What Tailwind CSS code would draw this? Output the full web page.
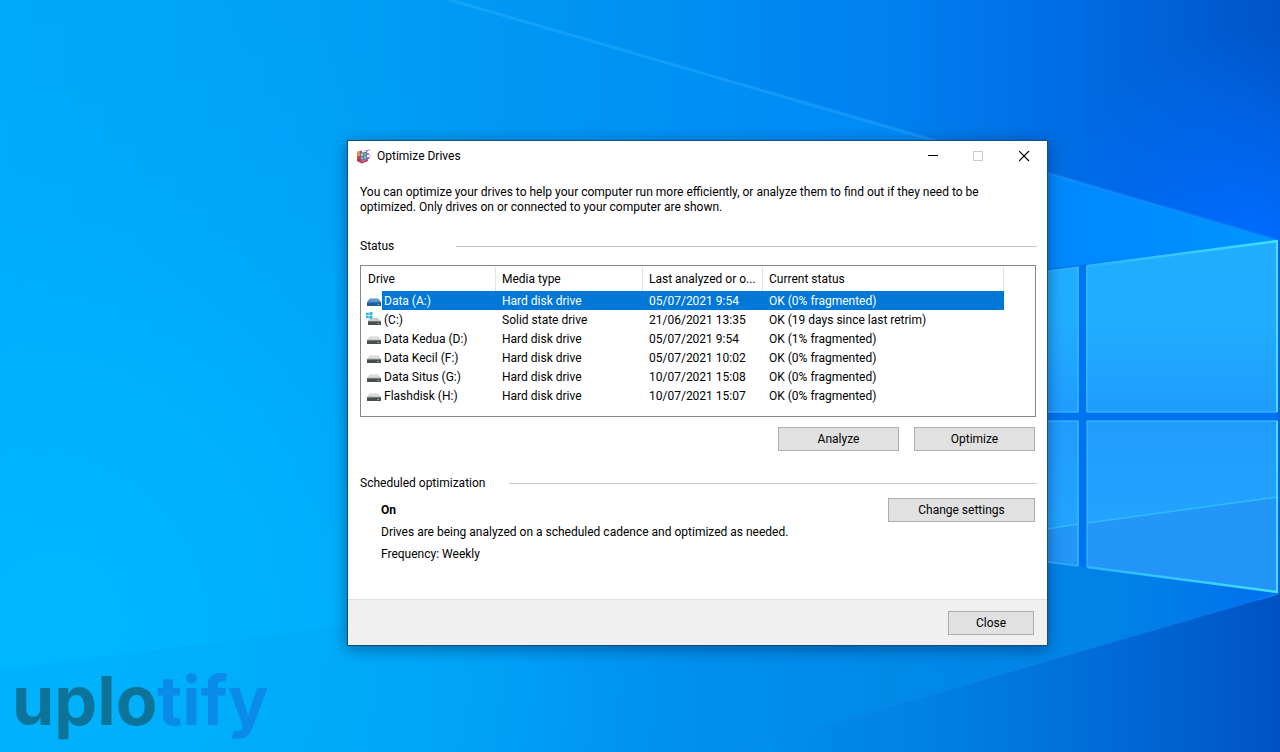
<!DOCTYPE html>
<html lang="en">
<head>
<meta charset="utf-8">
<meta name="viewport" content="width=device-width, initial-scale=1">
<title>Optimize Drives</title>
<script src="https://cdn.jsdelivr.net/npm/@tailwindcss/browser@4"></script>
</head>
<body class="relative min-h-screen overflow-hidden bg-[#0096f5] font-[Roboto,sans-serif] text-xs text-black">

<!-- Wallpaper -->
<svg class="absolute inset-0 h-full w-full" viewBox="0 0 1280 752" preserveAspectRatio="none" aria-hidden="true">
  <defs>
    <linearGradient id="base" x1="0" y1="0" x2="1" y2="0">
      <stop offset="0" stop-color="#00a9fb"/><stop offset=".25" stop-color="#00a0f6"/><stop offset=".5" stop-color="#0091f2"/><stop offset=".7" stop-color="#0080f0"/><stop offset=".85" stop-color="#006ae2"/><stop offset="1" stop-color="#0054c8"/>
    </linearGradient>
    <radialGradient id="cyan" gradientUnits="userSpaceOnUse" cx="60" cy="620" r="640">
      <stop offset="0" stop-color="#00b8ff"/><stop offset=".4" stop-color="#00b4ff" stop-opacity=".75"/><stop offset="1" stop-color="#00a8ff" stop-opacity="0"/>
    </radialGradient>
    <linearGradient id="beam" gradientUnits="userSpaceOnUse" x1="450" y1="0" x2="1278" y2="0">
      <stop offset="0" stop-color="#009cf8" stop-opacity="0"/><stop offset=".5" stop-color="#008df8" stop-opacity=".8"/><stop offset=".8" stop-color="#008aff"/><stop offset="1" stop-color="#0095ff"/>
    </linearGradient>
    <radialGradient id="glow" gradientUnits="userSpaceOnUse" cx="1250" cy="240" r="210">
      <stop offset="0" stop-color="#006cff"/><stop offset=".4" stop-color="#006cff" stop-opacity=".65"/><stop offset="1" stop-color="#0070f8" stop-opacity="0"/>
    </radialGradient>
    <linearGradient id="ray" gradientUnits="userSpaceOnUse" x1="450" y1="0" x2="1278" y2="240">
      <stop offset="0" stop-color="#2cb4ff" stop-opacity=".4"/><stop offset=".6" stop-color="#2aa8ff" stop-opacity=".45"/><stop offset="1" stop-color="#1e90ff" stop-opacity=".25"/>
    </linearGradient>
    <linearGradient id="low" gradientUnits="userSpaceOnUse" x1="500" y1="0" x2="1278" y2="0">
      <stop offset="0" stop-color="#0098ee" stop-opacity="0"/><stop offset=".5" stop-color="#008ae8"/><stop offset=".8" stop-color="#0082e6"/><stop offset="1" stop-color="#0070ee"/>
    </linearGradient>
    <linearGradient id="floor" gradientUnits="userSpaceOnUse" x1="0" y1="0" x2="1280" y2="0">
      <stop offset="0" stop-color="#00b0fc"/><stop offset=".3" stop-color="#00a8fa"/><stop offset=".55" stop-color="#0092ee"/><stop offset=".75" stop-color="#007ee2"/><stop offset=".88" stop-color="#0068d6"/><stop offset="1" stop-color="#0052c4"/>
    </linearGradient>
    <linearGradient id="haze" gradientUnits="userSpaceOnUse" x1="0" y1="0" x2="620" y2="0">
      <stop offset="0" stop-color="#00aefa" stop-opacity=".5"/><stop offset=".5" stop-color="#00a8f6" stop-opacity=".5"/><stop offset="1" stop-color="#009cf0" stop-opacity="0"/>
    </linearGradient>
    <linearGradient id="paneTop" x1="0" y1="0" x2="0" y2="1">
      <stop offset="0" stop-color="#22aeff"/><stop offset=".5" stop-color="#20acff"/><stop offset="1" stop-color="#1f9cff"/>
    </linearGradient>
    <linearGradient id="paneLow" x1="0" y1="0" x2="0" y2="1">
      <stop offset="0" stop-color="#209cff"/><stop offset=".6" stop-color="#22a4ff"/><stop offset="1" stop-color="#229cfa"/>
    </linearGradient>
    <linearGradient id="edge" x1="0" y1="0" x2="1" y2="0">
      <stop offset="0" stop-color="#2cb4ff"/><stop offset="1" stop-color="#3ee0ff"/>
    </linearGradient>
  </defs>
  <path fill="url(#base)" d="M0 0H1280V752H0Z"/>
  <path fill="url(#cyan)" d="M0 0H900V752H0Z"/>
  <path fill="url(#glow)" d="M1000 0H1280V240H1278L1000 160Z"/>
  <path fill="url(#beam)" d="M450 0L1278 240V600H450Z"/>
  <path stroke="url(#ray)" stroke-width="3" d="M450 0L1278 240"/>
  <path fill="url(#low)" d="M500 480H1278V594L733 752H500Z"/>
  <path fill="#0a62e0" d="M1278 240H1280V594H1278Z"/>
  <path fill="url(#floor)" d="M1280 594L733 752H1280Z"/>
  <path fill="url(#haze)" d="M0 670L620 590V752H0Z"/>
  <path stroke="#1a8cf0" stroke-opacity=".25" stroke-width="2" d="M733 752L1278 594"/>
  <path fill="#0074f0" d="M1040 270L1278 240V594L1040 561Z"/>
  <path fill="url(#paneTop)" d="M1040 272L1079 267V412H1040ZM1086 266L1277 240V412H1086Z"/>
  <path fill="url(#paneLow)" d="M1040 421H1079V566L1040 561ZM1087 421H1277V593L1087 567Z"/>
  <path fill="#2492f4" fill-opacity=".7" d="M1040 530L1079 524V566L1040 561ZM1087 523L1277 497V593L1087 567Z"/>
  <g fill="none" stroke-width="1.5">
    <path stroke="#35c0ff" stroke-opacity=".8" d="M1040 530L1079 524M1087 523L1277 497"/>
    <path stroke="#38baff" stroke-opacity=".8" d="M1040 272L1078 267V412H1040M1040 421H1078V566L1040 561M1087 412V266M1087 421V567M1087 412H1277M1087 421H1277"/>
    <path stroke="url(#edge)" stroke-width="2.500" d="M1087 266L1277 241M1087 567L1277 592"/>
    <path stroke="#4cdcff" stroke-width="2" d="M1277 240V412M1277 421V593"/>
  </g>
</svg>

<!-- Watermark -->
<p class="absolute top-[660px] left-[12px] font-['Inter',sans-serif] text-[68px] leading-[80px] font-bold text-[#0e7399]">uplo<span class="text-[#0a8bea]">tify</span></p>

<!-- Optimize Drives window -->
<main class="absolute top-[140px] left-[347px] flex w-[701px] flex-col border border-[#174e74] bg-white shadow-[0_3px_14px_rgba(0,20,60,0.45)]">
  <header class="flex h-[30px] items-center pl-2">
    <svg class="mr-1.5 size-[15px] shrink-0" viewBox="0 0 15 15" aria-hidden="true">
      <path fill="#c4473c" d="M1 3L6 1.500V14L1 11.500Z"/>
      <path fill="#dd8a78" d="M1 3L4 2V7L1 7.500Z"/>
      <path fill="#b03a48" d="M1 9.500L6 12L12 10V12L6 14.500L1 12Z"/>
      <path fill="#5a78b8" d="M4 4L11 2.500V11L5 12.500Z"/>
      <path fill="#f0c850" d="M5 4.500H7V7H5Z"/><path fill="#67c86a" d="M8 4H10V6.500H8Z"/>
      <path fill="#62c0e8" d="M5 8H7V10H5Z"/><path fill="#8fe07c" d="M8 7.500H10V9.500H8Z"/>
      <path fill="#d0609c" d="M5 10.500H10V12L6 13Z"/>
      <path fill="#9a6ce0" d="M11 4H13V6H11ZM11 8H13.500V10H11ZM10 1H12V2.500H10Z"/>
      <path fill="#d9a8f6" d="M12.500 0H14V2H12.500ZM8 1H9.500V2.500H8ZM13 6H14.500V7.500H13Z"/>
    </svg>
    <h1 class="flex-1">Optimize Drives</h1>
    <div class="flex self-stretch">
      <button type="button" aria-label="Minimize" class="grid w-[46px] place-items-center"><svg class="size-[11px]" viewBox="0 0 11 11"><path stroke="#000" d="M1 4.500H11"/></svg></button>
      <button type="button" aria-label="Maximize" disabled class="grid w-[46px] place-items-center"><svg class="size-[11px]" viewBox="0 0 11 11" fill="none"><path stroke="#ccc" d="M.5 .5H9.500V9.500H.5Z"/></svg></button>
      <button type="button" aria-label="Close window" class="grid w-[46px] place-items-center"><svg class="size-[11px]" viewBox="0 0 11 11"><path stroke="#000" stroke-width="1.200" d="M0 0L10 10M10 0L0 10"/></svg></button>
    </div>
  </header>

  <div class="pt-3.5 pr-[10px] pl-3">
    <p class="leading-[15px]">You can optimize your drives to help your computer run more efficiently, or analyze them to find out if they need to be<br>optimized. Only drives on or connected to your computer are shown.</p>

    <h2 class="mt-[23px] flex h-4 items-center"><span class="w-24">Status</span><span class="h-px flex-1 bg-[#c4c4c4]"></span></h2>

    <div class="mt-[11px] mr-px h-[152px] border border-[#828790] pt-px">
      <table class="w-full table-fixed border-separate border-spacing-0 text-left leading-[18px]">
        <colgroup><col class="w-[135px]"><col class="w-[147px]"><col class="w-[120px]"><col class="w-[241px]"><col></colgroup>
        <thead>
          <tr class="h-6">
            <th scope="col" class="border-r border-[#e2e2e2] p-0 pl-[7px] font-normal">Drive</th>
            <th scope="col" class="border-r border-[#e2e2e2] p-0 pl-1.5 font-normal">Media type</th>
            <th scope="col" class="border-r border-[#e2e2e2] p-0 pl-1.5 font-normal whitespace-nowrap">Last analyzed or o...</th>
            <th scope="col" class="border-r border-[#e2e2e2] p-0 pl-1.5 font-normal">Current status</th>
            <td class="p-0"></td>
          </tr>
        </thead>
        <tbody id="drives"></tbody>
      </table>
    </div>

    <div class="mt-[10px] mr-[2px] flex justify-end gap-[15px]">
      <button type="button" class="h-6 w-[121px] border border-[#adadad] bg-[#e1e1e1]">Analyze</button>
      <button type="button" class="h-6 w-[121px] border border-[#adadad] bg-[#e1e1e1]">Optimize</button>
    </div>

    <h2 class="mt-6 flex h-4 items-center"><span class="w-[149px]">Scheduled optimization</span><span class="h-px flex-1 bg-[#c4c4c4]"></span></h2>

    <div class="mt-[7px] mr-[2px] flex h-[101px] items-start justify-between pl-[21px]">
      <div class="flex flex-col gap-1.5 pt-1 leading-4">
        <p class="font-bold">On</p>
        <p>Drives are being analyzed on a scheduled cadence and optimized as needed.</p>
        <p>Frequency: Weekly</p>
      </div>
      <button type="button" class="h-6 w-[147px] border border-[#adadad] bg-[#e1e1e1]">Change settings</button>
    </div>
  </div>

  <footer class="flex h-[46px] items-center justify-end border-t border-[#dfdfdf] bg-[#f0f0f0] pr-[13px]">
    <button type="button" class="h-6 w-[86px] border border-[#adadad] bg-[#e1e1e1]">Close</button>
  </footer>
</main>

<svg class="hidden" aria-hidden="true">
  <symbol id="hdd" viewBox="0 0 16 16">
    <path fill="#c9c9c9" d="M4 5.500H12L15 9H1Z"/><path fill="#dedede" d="M4.500 6H11.500L13 8H3Z"/>
    <path fill="#4a4d4f" d="M1 9H15V13H1Z"/><path fill="#77797c" d="M1 9H15V10H1Z"/><path fill="#6fe07a" d="M11.500 11H13V12H11.500Z"/>
  </symbol>
  <symbol id="hdd-selected" viewBox="0 0 16 16">
    <path fill="#4a8cc6" d="M4 5.500H12L15 9H1Z"/><path fill="#5f9dd2" d="M4.500 6H11.500L13 8H3Z"/>
    <path fill="#1e5c94" d="M1 9H15V13H1Z"/><path fill="#3277b4" d="M1 9H15V10H1Z"/><path fill="#4cc0c8" d="M11.500 11H13V12H11.500Z"/>
  </symbol>
  <symbol id="hdd-system" viewBox="0 0 16 16">
    <path fill="#c9c9c9" d="M4 6H12L15 9H2Z"/><path fill="#4a4d4f" d="M2 9H15V13H2Z"/><path fill="#77797c" d="M2 9H15V10H2Z"/><path fill="#6fe07a" d="M11.500 11H13V12H11.500Z"/>
    <path fill="#fff" d="M0 0H7V7H0Z"/>
    <path fill="#1cb4e4" d="M0 1L2.700 .6V3.200H0ZM3.400 .5L6.400 0V3.200H3.400ZM0 3.900H2.700V6.500L0 6.100ZM3.400 3.900H6.400V7L3.400 6.600Z"/>
  </symbol>
</svg>

<script>
  const drives = [
    ['hdd-selected', 'Data (A:)', 'Hard disk drive', '05/07/2021 9:54', 'OK (0% fragmented)'],
    ['hdd-system', '(C:)', 'Solid state drive', '21/06/2021 13:35', 'OK (19 days since last retrim)'],
    ['hdd', 'Data Kedua (D:)', 'Hard disk drive', '05/07/2021 9:54', 'OK (1% fragmented)'],
    ['hdd', 'Data Kecil (F:)', 'Hard disk drive', '05/07/2021 10:02', 'OK (0% fragmented)'],
    ['hdd', 'Data Situs (G:)', 'Hard disk drive', '10/07/2021 15:08', 'OK (0% fragmented)'],
    ['hdd', 'Flashdisk (H:)', 'Hard disk drive', '10/07/2021 15:07', 'OK (0% fragmented)'],
  ];
  document.getElementById('drives').innerHTML = drives.map(([icon, name, media, date, status], i) => {
    const fill = i === 0 ? 'bg-[#0078d7] text-white' : '';
    const cells = [media, date, status].map(t => `<td class="p-0 pt-px pl-1.5 whitespace-nowrap ${fill}">${t}</td>`).join('');
    return `<tr class="h-[19px]">
      <td class="p-0 pl-[5px]"><div class="flex h-[19px] items-center"><svg class="mt-px size-4 shrink-0"><use href="#${icon}"/></svg><span class="h-[19px] flex-1 pt-px pl-[2px] whitespace-nowrap ${fill}">${name}</span></div></td>
      ${cells}<td class="p-0"></td></tr>`;
  }).join('');
</script>
</body>
</html>
